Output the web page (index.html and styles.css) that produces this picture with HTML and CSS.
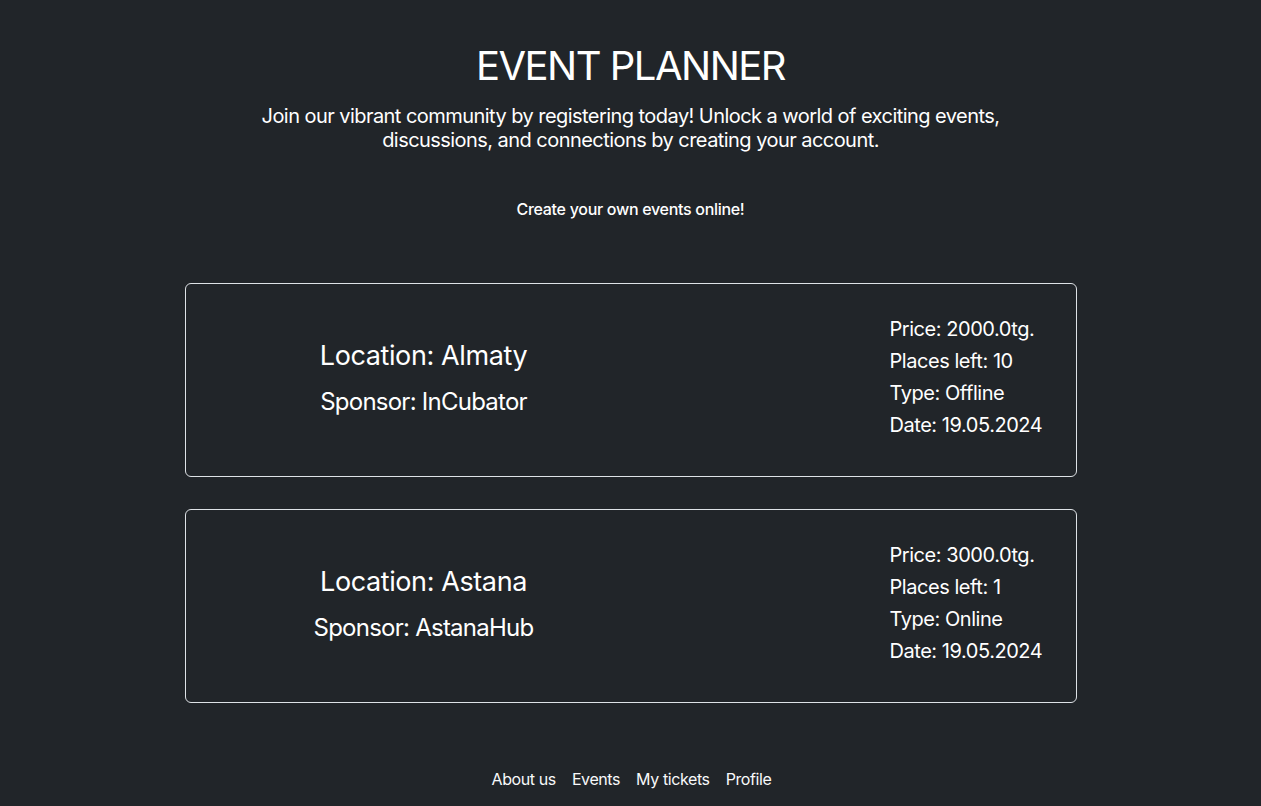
FILE: index.html
```html
<!DOCTYPE html>
<html lang="en">
<head>
<meta charset="utf-8">
<title>Event Planner</title>
<link rel="stylesheet" href="styles.css">
</head>
<body>
<header class="hero">
  <h1 class="title">EVENT PLANNER</h1>
  <p class="lead">Join our vibrant community by registering today! Unlock a world of exciting events,<br>discussions, and connections by creating your account.</p>
  <p class="tagline">Create your own events online!</p>
</header>
<main class="events">
  <div class="card">
    <div class="card-main">
      <div class="location">Location: Almaty</div>
      <div class="sponsor">Sponsor: InCubator</div>
    </div>
    <div class="card-info">
      <div>Price: 2000.0tg.</div>
      <div>Places left: 10</div>
      <div>Type: Offline</div>
      <div>Date: 19.05.2024</div>
    </div>
  </div>
  <div class="card">
    <div class="card-main">
      <div class="location">Location: Astana</div>
      <div class="sponsor">Sponsor: AstanaHub</div>
    </div>
    <div class="card-info">
      <div>Price: 3000.0tg.</div>
      <div>Places left: 1</div>
      <div>Type: Online</div>
      <div>Date: 19.05.2024</div>
    </div>
  </div>
</main>
<footer class="footer">
  <a href="#" class="nav-link">About us</a>
  <a href="#" class="nav-link">Events</a>
  <a href="#" class="nav-link">My tickets</a>
  <a href="#" class="nav-link">Profile</a>
</footer>
</body>
</html>
```
FILE: styles.css
```css
* { box-sizing: border-box; }
html, body { height: 100%; }
body {
  margin: 0;
  background: #212529;
  color: #f8f9fa;
  font-family: Inter, "Noto Sans", "Liberation Sans", sans-serif;
}
.hero {
  text-align: center;
  padding-top: 42px;
}
.title {
  margin: 0;
  font-size: 40px;
  line-height: 48px;
  font-weight: 400;
  letter-spacing: -1.5px;
  color: #fff;
}
.lead {
  margin: 14px 0 0;
  font-size: 20px;
  line-height: 24px;
  font-weight: 400;
  letter-spacing: -0.55px;
  color: #fff;
}
.tagline {
  margin: 45px 0 0;
  font-size: 16px;
  line-height: 24px;
  font-weight: 500;
  letter-spacing: -0.3px;
  color: #fff;
}
.events {
  width: 892px;
  margin: 62px auto 0;
  display: flex;
  flex-direction: column;
  gap: 32px;
}
.card {
  height: 194px;
  border: 1px solid #dee2e6;
  border-radius: 6px;
  display: flex;
  align-items: center;
}
.card-main {
  width: 476px;
  text-align: center;
  display: flex;
  flex-direction: column;
  gap: 15px;
  margin-top: -4px;
}
.location {
  font-size: 27px;
  line-height: 32px;
  letter-spacing: -0.4px;
  color: #fff;
}
.sponsor {
  font-size: 24px;
  line-height: 30px;
  letter-spacing: -0.75px;
  color: #fff;
}
.card-info {
  margin-left: 228px;
  font-size: 20px;
  line-height: 32px;
  letter-spacing: -0.45px;
  color: #fff;
  margin-top: -6px;
}
.footer {
  display: flex;
  justify-content: center;
  gap: 16px;
  margin-top: 64px;
  padding-left: 2px;
}
.nav-link {
  color: #f8f9fa;
  text-decoration: none;
  font-size: 16px;
  line-height: 24px;
  letter-spacing: -0.4px;
}
```
